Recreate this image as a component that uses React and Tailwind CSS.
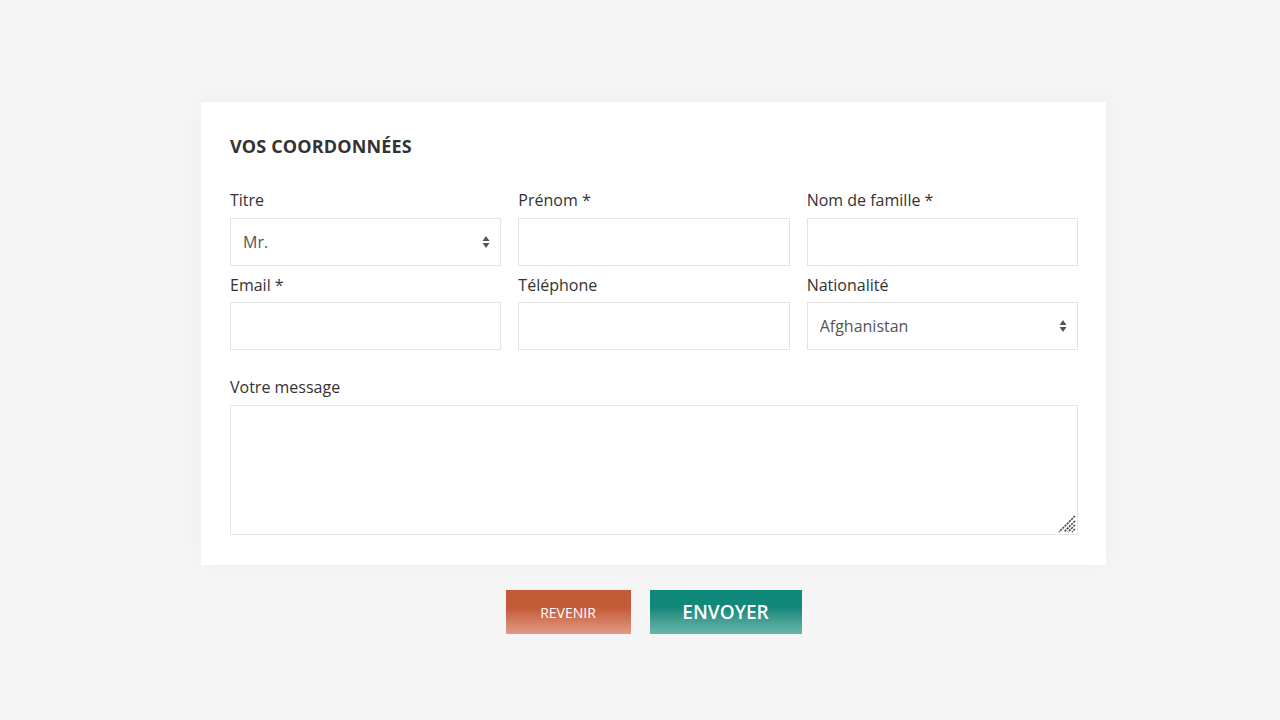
import React from "react";

const font = { fontFamily: '"Open Sans", "Liberation Sans", sans-serif' };

const Arrows = () => (
  <svg width="8" height="14" viewBox="0 0 8 14" className="absolute right-[11px] top-1/2 -translate-y-1/2 pointer-events-none">
    <path d="M4 1 L7.5 6 L0.5 6 Z" fill="#555" />
    <path d="M4 13 L7.5 8 L0.5 8 Z" fill="#555" />
  </svg>
);

const Grip = () => (
  <svg width="20" height="20" viewBox="0 0 20 20" className="absolute right-[1px] bottom-[1px] pointer-events-none">
    <path d="M18 2 L2 18 M18 7 L7 18 M18 11 L11 18 M18 15 L15 18" stroke="#444" strokeWidth="1.6" strokeDasharray="2.2 0.9" />
  </svg>
);

const Field = ({ label, select, value, second }) => (
  <div className="flex flex-col">
    <label className={`text-[16px] leading-[24px] text-[#333] ${second ? "mb-[5px]" : "mb-[6px]"}`}>{label}</label>
    {select ? (
      <div className="relative">
        <select
          defaultValue={value}
          className="appearance-none w-full h-[48px] border border-[#e5e5e5] bg-white px-[12px] text-[16px] text-[#555] outline-none"
          style={font}
        >
          <option>{value}</option>
        </select>
        <Arrows />
      </div>
    ) : (
      <input className="w-full h-[48px] border border-[#e5e5e5] bg-white px-[12px] text-[16px] outline-none" />
    )}
  </div>
);

export default function App() {
  return (
    <div className="min-h-screen bg-[#f5f5f5] pt-[102px]" style={font}>
      <div className="ml-[201px] w-[905px]">
        <div className="bg-white pt-[30px] pb-[30px] pl-[29px] pr-[28px] shadow-[0_-4px_24px_rgba(0,0,0,0.035)]">
          <h2 className="text-[18px] leading-[28px] font-bold text-[#333] uppercase tracking-[0.15px]">Vos coordonnées</h2>
          <div className="grid grid-cols-3 gap-x-[17px] gap-y-[7px] mt-[28px]">
            <Field label="Titre" select value="Mr." />
            <Field label="Prénom *" />
            <Field label="Nom de famille *" />
            <Field label="Email *" second />
            <Field label="Téléphone" second />
            <Field label="Nationalité" select value="Afghanistan" second />
          </div>
          <div className="flex flex-col mt-[25px]">
            <label className="text-[16px] leading-[24px] text-[#333] mb-[6px]">Votre message</label>
            <div className="relative">
              <textarea className="w-full h-[130px] border border-[#e5e5e5] bg-white p-[12px] text-[16px] outline-none resize-none block" />
              <Grip />
            </div>
          </div>
        </div>
        <div className="flex justify-center gap-[19px] mt-[25px]">
          <button className="w-[125px] h-[44px] bg-gradient-to-b from-[#c35a38] from-40% to-[#e19a85] text-white text-[14px] uppercase">
            Revenir
          </button>
          <button className="w-[152px] h-[44px] bg-gradient-to-b from-[#10887a] from-40% to-[#68b7ad] text-white text-[19px] font-semibold uppercase">
            Envoyer
          </button>
        </div>
      </div>
    </div>
  );
}
